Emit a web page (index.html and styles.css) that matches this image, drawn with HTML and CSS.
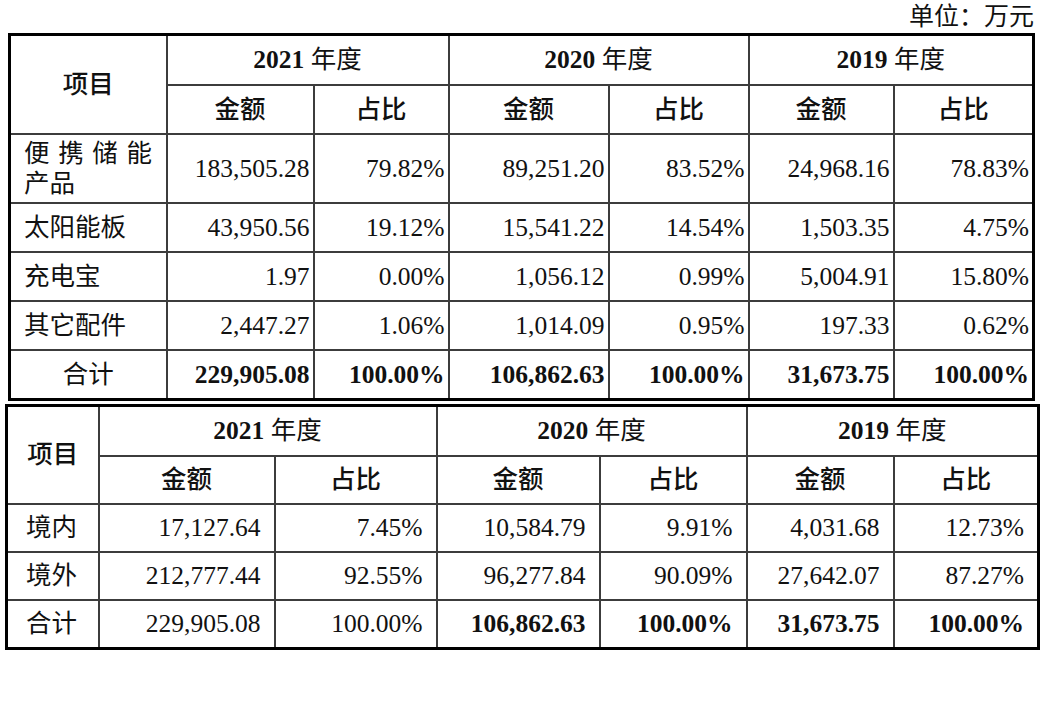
FILE: index.html
```html
<!DOCTYPE html>
<html lang="zh-CN">
<head>
<meta charset="utf-8">
<title>收入构成</title>
<link rel="stylesheet" href="styles.css">
</head>
<body>
<div class="page">
  <div class="unit">单位：万元</div>
  <table class="tbl t1">
    <colgroup>
      <col class="c157"><col class="c147"><col class="c135"><col class="c160"><col class="c140"><col class="c145"><col class="c140b">
    </colgroup>
    <tr class="h1">
      <td rowspan="2" class="hd center">项目</td>
      <td colspan="2" class="center"><b>2021</b> 年度</td>
      <td colspan="2" class="center"><b>2020</b> 年度</td>
      <td colspan="2" class="center"><b>2019</b> 年度</td>
    </tr>
    <tr class="h2">
      <td class="hd center">金额</td><td class="hd center">占比</td>
      <td class="hd center">金额</td><td class="hd center">占比</td>
      <td class="hd center">金额</td><td class="hd center">占比</td>
    </tr>
    <tr class="r-tall">
      <td class="label"><span class="spread"><span>便</span><span>携</span><span>储</span><span>能</span></span>产品</td>
      <td class="num">183,505.28</td><td class="num">79.82%</td>
      <td class="num">89,251.20</td><td class="num">83.52%</td>
      <td class="num">24,968.16</td><td class="num">78.83%</td>
    </tr>
    <tr class="r">
      <td class="label">太阳能板</td>
      <td class="num">43,950.56</td><td class="num">19.12%</td>
      <td class="num">15,541.22</td><td class="num">14.54%</td>
      <td class="num">1,503.35</td><td class="num">4.75%</td>
    </tr>
    <tr class="r">
      <td class="label">充电宝</td>
      <td class="num">1.97</td><td class="num">0.00%</td>
      <td class="num">1,056.12</td><td class="num">0.99%</td>
      <td class="num">5,004.91</td><td class="num">15.80%</td>
    </tr>
    <tr class="r">
      <td class="label">其它配件</td>
      <td class="num">2,447.27</td><td class="num">1.06%</td>
      <td class="num">1,014.09</td><td class="num">0.95%</td>
      <td class="num">197.33</td><td class="num">0.62%</td>
    </tr>
    <tr class="r">
      <td class="center">合计</td>
      <td class="num bold">229,905.08</td><td class="num bold">100.00%</td>
      <td class="num bold">106,862.63</td><td class="num bold">100.00%</td>
      <td class="num bold">31,673.75</td><td class="num bold">100.00%</td>
    </tr>
  </table>

  <table class="tbl t2">
    <colgroup>
      <col class="c92"><col class="c176"><col class="c162"><col class="c163"><col class="c147"><col class="c147"><col class="c145">
    </colgroup>
    <tr class="h1b">
      <td rowspan="2" class="hd center">项目</td>
      <td colspan="2" class="center"><b>2021</b> 年度</td>
      <td colspan="2" class="center"><b>2020</b> 年度</td>
      <td colspan="2" class="center"><b>2019</b> 年度</td>
    </tr>
    <tr class="rb">
      <td class="hd center">金额</td><td class="hd center">占比</td>
      <td class="hd center">金额</td><td class="hd center">占比</td>
      <td class="hd center">金额</td><td class="hd center">占比</td>
    </tr>
    <tr class="rb">
      <td class="label2">境内</td>
      <td class="num2">17,127.64</td><td class="num2">7.45%</td>
      <td class="num2">10,584.79</td><td class="num2">9.91%</td>
      <td class="num2">4,031.68</td><td class="num2">12.73%</td>
    </tr>
    <tr class="rb">
      <td class="label2">境外</td>
      <td class="num2">212,777.44</td><td class="num2">92.55%</td>
      <td class="num2">96,277.84</td><td class="num2">90.09%</td>
      <td class="num2">27,642.07</td><td class="num2">87.27%</td>
    </tr>
    <tr class="rb">
      <td class="label2">合计</td>
      <td class="num2">229,905.08</td><td class="num2">100.00%</td>
      <td class="num2 bold">106,862.63</td><td class="num2 bold">100.00%</td>
      <td class="num2 bold">31,673.75</td><td class="num2 bold">100.00%</td>
    </tr>
  </table>
</div>
</body>
</html>
```
FILE: styles.css
```css
html, body {
  margin: 0;
  background: #fff;
}
body {
  font-family: "Liberation Serif", "Noto Sans CJK SC", serif;
  color: #111;
}
.page {
  padding: 2px 0 0 5px;
}
.unit {
  width: 1029px;
  text-align: right;
  font-size: 25px;
  line-height: 30px;
  height: 31px;
}
.tbl {
  border-collapse: collapse;
  table-layout: fixed;
  border: 3px solid #000;
  font-size: 25.5px;
  line-height: 30px;
}
.tbl td {
  border: 2px solid #3c3c3c;
  padding: 0 4px;
  vertical-align: middle;
  white-space: nowrap;
}
.t1 {
  width: 1024px;
  margin-left: 3px;
}
.t2 {
  width: 1032px;
  margin-top: 3px;
}
.c157 { width: 157px; }
.c147 { width: 147px; }
.c135 { width: 135px; }
.c160 { width: 160px; }
.c140 { width: 140px; }
.c145 { width: 145px; }
.c140b { width: 140px; }
.c92 { width: 92px; }
.c176 { width: 176px; }
.c162 { width: 162px; }
.c163 { width: 163px; }

.h1 td { height: 48px; }
.h2 td { height: 47px; }
.r td { height: 47px; }
.r-tall td { height: 67px; }
.h1b td { height: 48px; }
.rb td { height: 46px; }

.tbl td.center { text-align: center; }
.tbl td.hd { font-weight: 500; }
.tbl b, .tbl td.bold { font-weight: 700; }
.tbl td.num {
  text-align: right;
  padding-right: 3px;
}
.tbl td.num2 {
  text-align: right;
  padding-right: 13px;
}
.tbl td.label {
  text-align: left;
  padding-left: 13px;
  white-space: normal;
  line-height: 30px;
}
.tbl td.label2 {
  text-align: left;
  padding-left: 18px;
}
.spread {
  display: flex;
  justify-content: space-between;
  width: 128px;
}
```
